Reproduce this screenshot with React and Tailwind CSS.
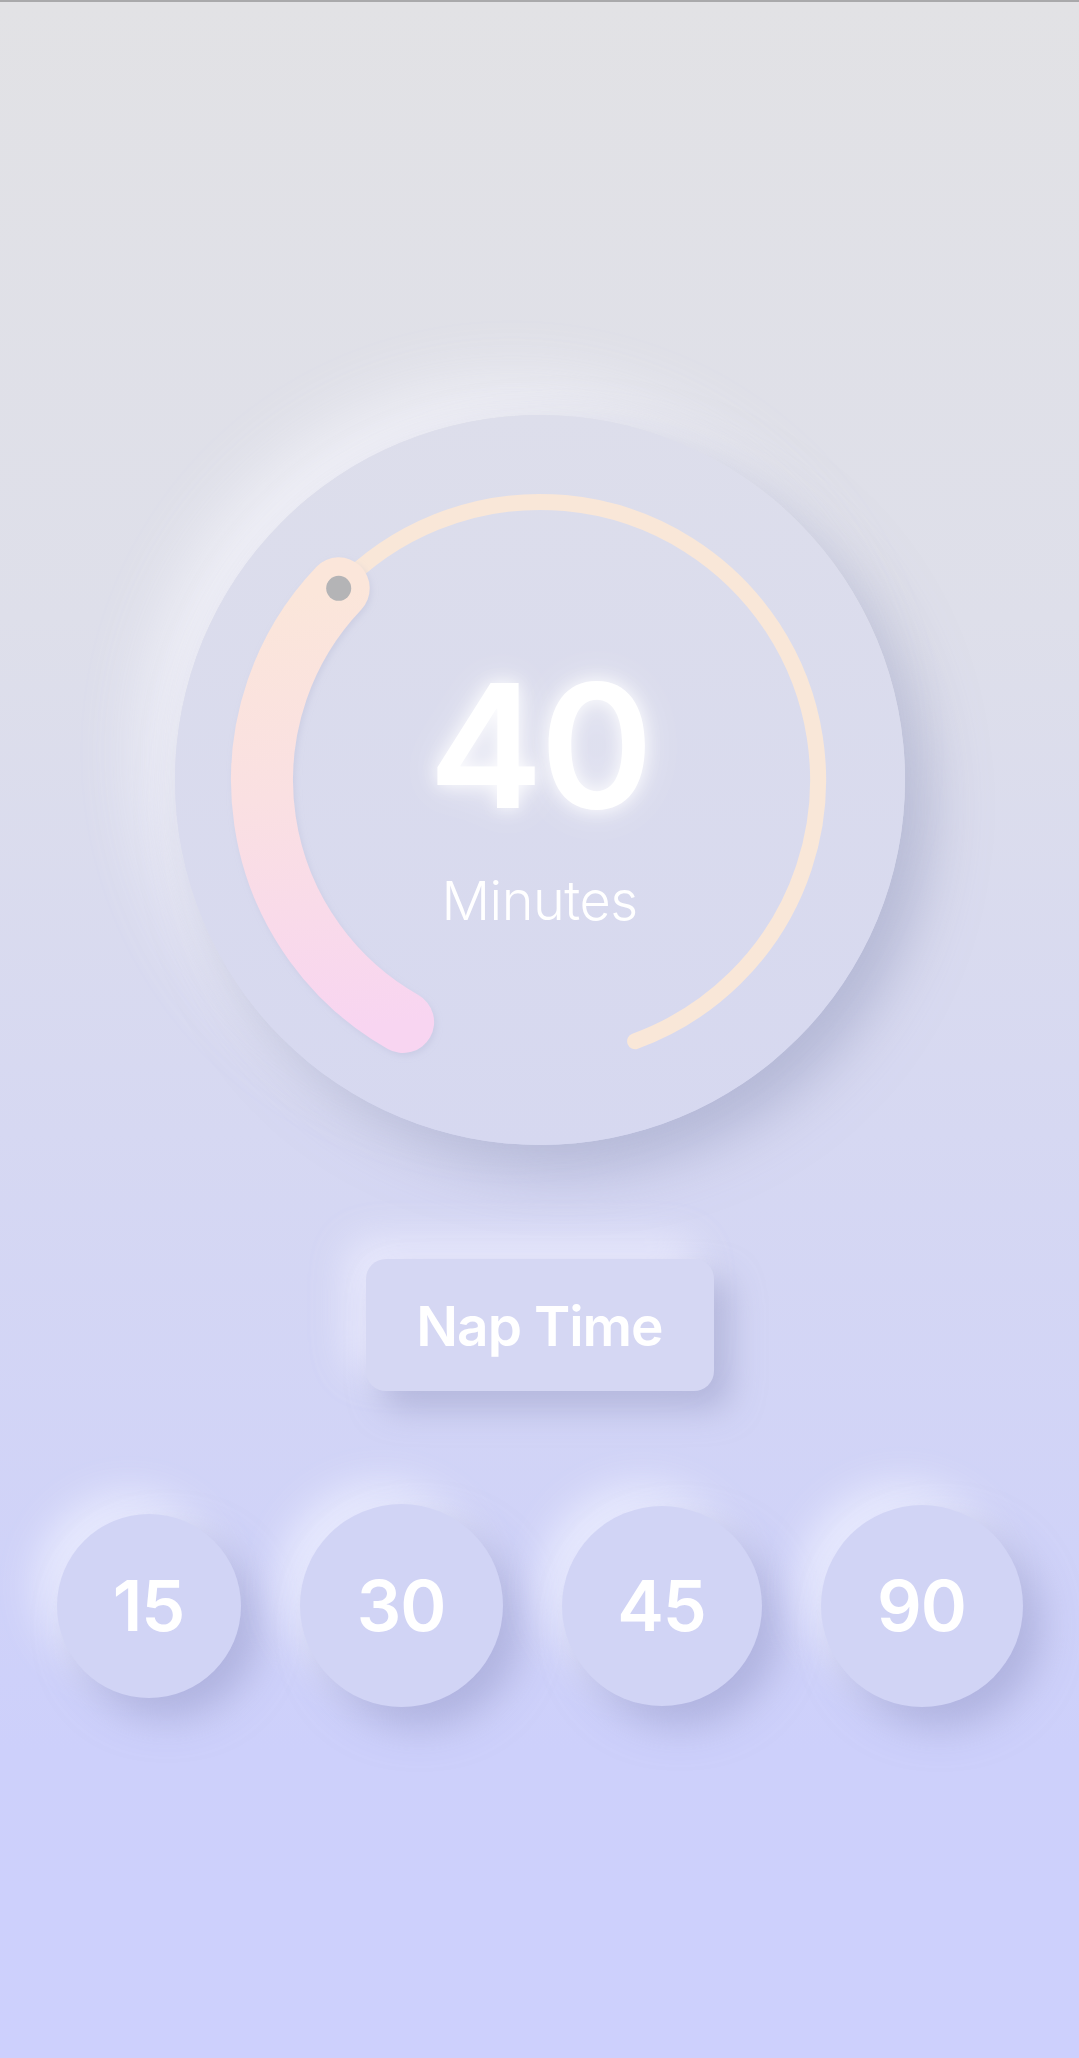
import React from "react";

function Dial() {
  return (
    <svg className="absolute inset-0" width="730" height="730" viewBox="0 0 730 730">
      <defs>
        <linearGradient id="thick" gradientUnits="userSpaceOnUse" x1="228" y1="607" x2="164" y2="173">
          <stop offset="0" stopColor="#f8d5f1" />
          <stop offset="0.55" stopColor="#fae0e2" />
          <stop offset="1" stopColor="#fbe6da" />
        </linearGradient>
        <filter id="soft" filterUnits="userSpaceOnUse" x="0" y="0" width="730" height="730">
          <feDropShadow dx="2" dy="3" stdDeviation="3" floodColor="#aeb1cf" floodOpacity="0.3" />
        </filter>
      </defs>
      <path
        d="M 163.7 173.3 A 278 278 0 1 1 460.1 626.2"
        fill="none"
        stroke="#f9e7d8"
        strokeWidth="16"
        strokeLinecap="round"
      />
      <g filter="url(#soft)">
        <path
          d="M 228.1 607 A 278 278 0 0 1 163.7 173.3"
          fill="none"
          stroke="url(#thick)"
          strokeWidth="62"
          strokeLinecap="round"
        />
      </g>
      <circle cx="163.7" cy="173.3" r="12.5" fill="#b4b4b6" />
    </svg>
  );
}

export default function App() {
  const presets = [
    { v: "15", cls: "w-[184px] h-[184px]" },
    { v: "30", cls: "w-[203px] h-[203px]" },
    { v: "45", cls: "w-[200px] h-[200px]" },
    { v: "90", cls: "w-[202px] h-[202px]" },
  ];
  return (
    <div className="min-h-[2058px] w-full border-t-2 border-[#a9a9ab] bg-[linear-gradient(180deg,#e2e2e5_0%,#dedfea_30%,#d6d8f2_55%,#cdd0fb_85%,#cdd0fd_100%)] font-[Inter,sans-serif] text-white flex flex-col items-center">
      <div className="mt-[413px] relative w-[730px] h-[730px] rounded-full bg-[linear-gradient(180deg,#dddeeb_0%,#d6d8f0_100%)] shadow-[24px_26px_55px_rgba(150,154,192,0.55),-28px_-28px_70px_rgba(246,246,252,0.85)]">
        <Dial />
        <div className="relative flex flex-col items-center pt-[244px]">
          <div className="text-[172px] leading-none font-semibold tracking-[-3px] [text-shadow:0_0_18px_rgba(255,255,255,0.95),0_0_40px_rgba(255,255,255,0.6)]">
            40
          </div>
          <div className="mt-[43px] text-[54px] leading-none font-light tracking-[-0.5px]">Minutes</div>
        </div>
      </div>

      <div className="mt-[114px] w-[348px] h-[132px] rounded-[20px] bg-[#d5d7f3] flex items-center justify-center shadow-[16px_18px_32px_rgba(158,162,204,0.6),-18px_-18px_40px_rgba(238,239,255,0.85)]">
        <span className="text-[55px] font-semibold leading-none tracking-[-1px] pt-[3px]">Nap Time</span>
      </div>

      <div className="mt-[113px] flex items-center gap-[59px]">
        {presets.map((p) => (
          <div
            key={p.v}
            className={`${p.cls} rounded-full bg-[#d1d4f5] flex items-center justify-center shadow-[18px_20px_38px_rgba(155,159,205,0.6),-20px_-20px_42px_rgba(236,238,255,0.9)]`}
          >
            <span className="text-[70px] font-semibold leading-none tracking-[-1px]">{p.v}</span>
          </div>
        ))}
      </div>
    </div>
  );
}
